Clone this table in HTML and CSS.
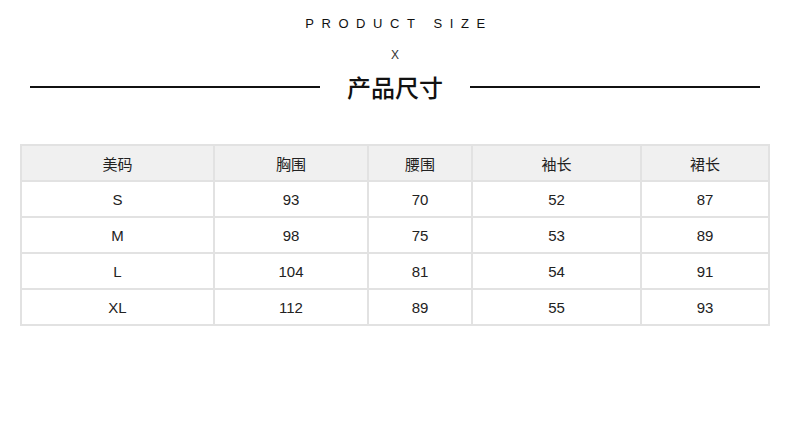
FILE: index.html
```html
<!DOCTYPE html>
<html lang="zh">
<head>
<meta charset="utf-8">
<link rel="stylesheet" href="styles.css">
</head>
<body>
<div class="page">
  <header class="head">
    <div class="en">PRODUCT SIZE</div>
    <div class="x">X</div>
    <div class="titlebar">
      <span class="line"></span>
      <h1 class="cn">产品尺寸</h1>
      <span class="line"></span>
    </div>
  </header>
  <table class="size">
    <colgroup>
      <col class="c1"><col class="c2"><col class="c3"><col class="c4"><col class="c5">
    </colgroup>
    <thead>
      <tr><th>美码</th><th>胸围</th><th>腰围</th><th>袖长</th><th>裙长</th></tr>
    </thead>
    <tbody>
      <tr><td>S</td><td>93</td><td>70</td><td>52</td><td>87</td></tr>
      <tr><td>M</td><td>98</td><td>75</td><td>53</td><td>89</td></tr>
      <tr><td>L</td><td>104</td><td>81</td><td>54</td><td>91</td></tr>
      <tr><td>XL</td><td>112</td><td>89</td><td>55</td><td>93</td></tr>
    </tbody>
  </table>
</div>
</body>
</html>
```
FILE: styles.css
```css
* { box-sizing: border-box; }
html, body { margin: 0; padding: 0; background: #fff; }
body { font-family: "Liberation Sans", "Noto Sans CJK SC", sans-serif; color: #333; }
.page { width: 790px; height: 446px; padding-top: 16px; }
.head { display: flex; flex-direction: column; align-items: center; }
.en { font-size: 13px; letter-spacing: 7.6px; margin-left: 8px; color: #111; line-height: 16px; }
.x { font-size: 12px; margin-top: 16px; line-height: 14px; color: #333; font-family: "Liberation Sans", sans-serif; }
.titlebar { display: flex; align-items: center; width: 100%; margin-top: 7px; padding: 0 30px 0 30px; }
.line { height: 2px; background: #111; width: 290px; }
.cn { flex: 1; margin: 0; text-align: center; font-family: "Noto Sans CJK SC", sans-serif; font-weight: 500; font-size: 24px; line-height: 36px; color: #111; }
.size { border-collapse: collapse; margin: 39px 0 0 20px; width: 748px; table-layout: fixed; }
.c1 { width: 193px; } .c2 { width: 154px; } .c3 { width: 104px; } .c4 { width: 169px; } .c5 { width: 128px; }
.size th, .size td { border: 2px solid #e2e2e2; height: 36px; text-align: center; font-size: 15px; padding: 0; }
.size th { background: #f0f0f0; font-weight: normal; font-family: "Noto Sans CJK SC", sans-serif; font-size: 15px; color: #222; }
.size td { color: #222; }
```
